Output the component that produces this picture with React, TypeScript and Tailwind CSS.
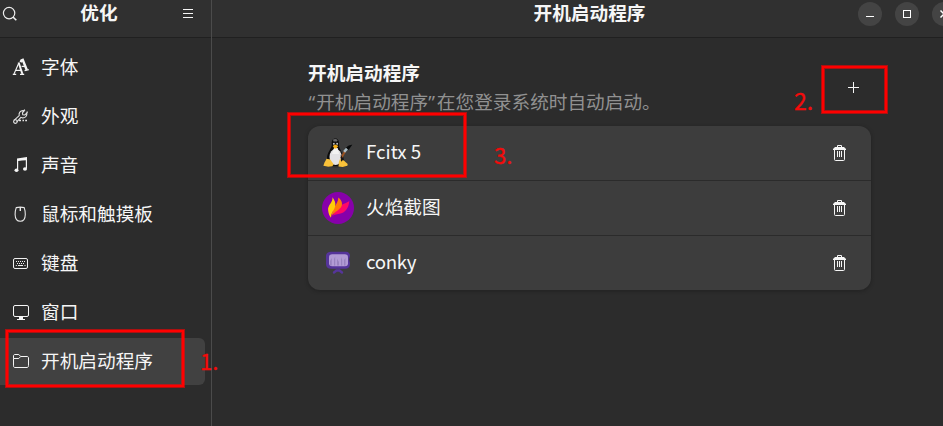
import type { ReactNode } from "react";

const FontIcon = () => (
  <svg width="18" height="20" viewBox="0 0 18 20" fill="none" stroke="#f4f4f4">
    <path d="M2 17L6.8 6M3.2 13.4H9" strokeWidth="1.1" />
    <path d="M6.6 5.5L10.4 17" strokeWidth="2" />
    <path d="M0.8 17.4H4.2M8 17.4H12.2" strokeWidth="1.2" />
    <path d="M8.5 5.2L10 2.6M10.3 1.8L14.8 13" strokeWidth="2.4" />
    <path d="M9.6 9.4H13" strokeWidth="1.3" />
    <path d="M12.6 13.7L16.8 12.6" strokeWidth="1.3" />
  </svg>
);

const WrenchIcon = () => (
  <svg width="18" height="20" viewBox="0 0 18 20" fill="none" stroke="#e4e4e4" strokeWidth="1.1">
    <path d="M2 14.3L7.2 9.6C6.6 7 8.2 4.6 11 4.6L12.2 4.9L10.4 6.8L10.8 8.7L12.8 9L14.8 7.1C15.3 9.7 13.5 12 10.5 11.9L8.9 11.3L4.8 15.8" />
    <circle cx="3.4" cy="15.6" r="1.8" />
    <path d="M7 14.5H9M10.5 14.5H12M13.2 14.5H15" strokeWidth="1.6" />
    <path d="M11.8 4.5L13 3.7M14.9 7L15.4 5.5" />
  </svg>
);

const MusicIcon = () => (
  <svg width="18" height="20" viewBox="0 0 18 20" fill="#f5f5f5">
    <path d="M5 3.5Q10 2.8 15 1.9V13.4H13.8V5.2Q10 5.5 6.2 6V14.5H5Z" />
    <ellipse cx="4.5" cy="15.2" rx="2" ry="1.8" />
    <ellipse cx="13" cy="14" rx="2" ry="1.8" />
  </svg>
);

const MouseIcon = () => (
  <svg width="18" height="20" viewBox="0 0 18 20" fill="none" stroke="#e8e8e8" strokeWidth="1.1">
    <path d="M4.2 3.6Q8.2 2.6 12.2 3.6Q13.2 6.2 13.3 10.5C13.2 14.9 11 17.3 8.3 17.3C5.4 17.3 3.2 14.9 3.1 10.5Q3.2 6.2 4.2 3.6Z" />
    <path d="M8.3 3V7" strokeWidth="1.4" />
  </svg>
);

const KeyboardIcon = () => (
  <svg width="18" height="20" viewBox="0 0 18 20" fill="none" stroke="#f0f0f0">
    <rect x="1.5" y="5.5" width="14" height="10" rx="1.5" />
    <path d="M4 8.5H14M5 10.5H13" strokeDasharray="1 1" />
    <path d="M3.8 12.5H4.8M6 12.5H11M12.5 12.5H13.5" />
  </svg>
);

const MonitorIcon = () => (
  <svg width="18" height="20" viewBox="0 0 18 20" fill="none" stroke="#f5f5f5">
    <rect x="1.5" y="3.5" width="15" height="11" rx="1.5" />
    <path d="M7 15V17H5V18H13V17H11V15" fill="#f5f5f5" stroke="none" />
  </svg>
);

const FolderIcon = () => (
  <svg width="18" height="20" viewBox="0 0 18 20" fill="none" stroke="#f5f5f5">
    <path d="M1.5 7.5V5C1.5 4 2 3.5 3 3.5H6.8L8.7 5.5H15C16 5.5 16.5 6 16.5 7V14.5C16.5 15.6 16 16.5 15 16.5H3C2 16.5 1.5 16 1.5 14.8ZM1.5 7.5H6.8L8.7 5.5" />
  </svg>
);

const TrashIcon = () => (
  <svg className="block" width="16" height="18" viewBox="0 0 16 18" fill="none" stroke="#f6f6f6">
    <path d="M4.5 3V1.5H8.5V3" />
    <path d="M0 6V5L2 3H11L13 5V6Z" fill="#f6f6f6" stroke="none" />
    <path d="M1.5 5V15.5C1.5 16.2 1.8 16.5 2.5 16.5H10.5C11.2 16.5 11.5 16.2 11.5 15.5V5" />
    <path d="M4.5 7V13M6.5 7V13M8.5 7V13" />
  </svg>
);

const PenguinIcon = () => (
  <svg width="32" height="32" viewBox="0 0 32 32">
    <ellipse cx="14" cy="29" rx="11" ry="1.5" fill="#252525" opacity=".6" />
    <path d="M13.5 1.5C10.4 1.5 9.4 4.2 9.8 7.5C9.8 11.5 5 15.2 5 21.5C5 26 9 29 14 29C19.5 29 22 26 21.5 21.5C21 15.6 16.9 12 17 8C17.1 4.2 16.4 1.5 13.5 1.5Z" fill="#0c0c0c" />
    <path d="M11 2.6Q13.5 1.2 15.6 2.9L15 4.5H11.5Z" fill="#69696b" />
    <ellipse cx="13.6" cy="20" rx="6.1" ry="8" fill="#e3e2e5" />
    <path d="M12 11H15.7L17 17H10Z" fill="#f2f2f2" />
    <circle cx="12" cy="6.8" r="1.1" fill="#c8c8c8" />
    <circle cx="15" cy="6.8" r="1.1" fill="#c8c8c8" />
    <circle cx="12.3" cy="7" r=".5" fill="#111" />
    <circle cx="14.7" cy="7" r=".5" fill="#111" />
    <path d="M10.7 9L13.3 7.6L16.3 9.1L14.3 11.6L12.4 11.5Z" fill="#f5ad13" />
    <path d="M4.6 21.8L8.3 22.5L11.6 27.2L10.4 29.2L6.2 29.8L1.4 28.8L2.4 25.8Z" fill="#fac23a" />
    <path d="M18 22L21.8 23.5L25.7 27L25.4 28.7L20.7 29.9L16.5 29.5L16.8 25Z" fill="#fac23a" />
    <path d="M19 21.5L23.2 14" stroke="#9b5221" strokeWidth="2" />
    <path d="M22.1 14.9L25 11.7" stroke="#a9bbc4" strokeWidth="2.5" />
    <path d="M24 10.4Q27 7.5 30.3 7.8Q29 9.6 26.6 13Z" fill="#080a0b" />
    <path d="M18.7 17.5L21.6 22.5L19 24.8Z" fill="#171515" />
  </svg>
);

const FlameIcon = () => (
  <svg width="32" height="32" viewBox="0 0 32 32">
    <circle cx="16" cy="16" r="16" fill="#8700aa" />
    <path d="M27.3 8.8C25 11.6 20.4 11.2 17.4 14.8Q13.6 19 9.4 25.5C11.4 22.5 14 22.4 17.5 21.8C23 20.8 26.8 16.5 27.3 8.8Z" fill="#ff0868" />
    <path d="M16.2 5.4C16.6 9 13.8 12.7 11.3 17L8.8 25.5C11 20.4 15.8 19.5 18.8 15.5C21.2 12.2 20 8.2 16.2 5.4Z" fill="#ff7a09" />
    <path d="M10.5 5.2C11.1 10.2 5.6 13 6.1 18C6.4 21 7.4 24.3 9 25.8C8.6 21 12.3 18.7 13.2 14C13.8 11 12.6 8 10.5 5.2Z" fill="#ffcf08" />
  </svg>
);

const ConkyIcon = () => (
  <svg width="32" height="32" viewBox="0 0 32 32">
    <path d="M12 25.5L14.5 23.5H17.5L20 25.5" fill="none" stroke="#56359a" strokeWidth="2.4" strokeLinecap="round" />
    <path d="M8.5 4.7H24Q28 5 28 8.8L27 12.5L28 16.2Q28 21.8 23 21.8H9Q4 21.8 4 17V9Q4 5.1 8.5 4.7Z" fill="#55349a" />
    <rect x="7" y="7.3" width="19" height="12" rx="3" fill="#b29bd5" />
    <path d="M8 18.5V14L9.8 11V18.5M12 18.5V12L13.2 9.5V18.5M15 18.5V11.8L17 15V18.5M19 18.5V10L20.2 13V18.5M22 18.5V13L23.5 11V18.5" fill="#8f79b5" opacity=".7" />
  </svg>
);

const navigation = [
  { label: "字体", icon: <FontIcon /> },
  { label: "外观", icon: <WrenchIcon /> },
  { label: "声音", icon: <MusicIcon /> },
  { label: "鼠标和触摸板", icon: <MouseIcon /> },
  { label: "键盘", icon: <KeyboardIcon /> },
  { label: "窗口", icon: <MonitorIcon /> },
  { label: "开机启动程序", icon: <FolderIcon />, selected: true },
];

const programs = [
  { name: "Fcitx 5", icon: <PenguinIcon />, spacing: "" },
  { name: "火焰截图", icon: <FlameIcon />, spacing: "" },
  { name: "conky", icon: <ConkyIcon />, spacing: "tracking-[-0.3px]" },
];

function WindowButton({ label, children }: { label: string; children: ReactNode }) {
  return (
    <button aria-label={label} className="flex size-6 shrink-0 items-center justify-center rounded-full bg-[#444444]">
      <svg width="24" height="24" viewBox="0 0 24 24" fill="none" stroke="#ffffff">{children}</svg>
    </button>
  );
}

function Marker({ box, number, numberPlace }: { box: string; number: string; numberPlace: string }) {
  return (
    <>
      <div className={`pointer-events-none absolute border-2 border-[#ff0000] shadow-[0_0_0_1px_#ff000099,inset_0_0_0_1px_#ff000099] ${box}`} />
      <span className={`pointer-events-none absolute font-['Noto_Sans_CJK_SC',sans-serif] leading-8 text-[#f40b0b] [-webkit-text-stroke:0.3px_#f40b0b] ${numberPlace}`}>{number}</span>
    </>
  );
}

export default function App() {
  return (
    <div className="relative flex h-[426px] w-[943px] overflow-hidden bg-[#2c2c2c] font-['Noto_Sans','Noto_Sans_CJK_SC',sans-serif] text-[18.67px] text-[#f6f6f6]">
      <aside className="flex w-[212px] shrink-0 flex-col border-r border-[#4b4b4b]">
        <header className="flex h-[38px] shrink-0 items-start border-b border-[#202020] bg-[#303030]">
          <svg className="mt-1 shrink-0" width="20" height="20" viewBox="0 0 20 20" fill="none" stroke="#eeeeee" strokeWidth="1.2">
            <circle cx="9.1" cy="9.1" r="5.7" />
            <path d="M13 13L16.3 16.3" strokeWidth="1.6" />
          </svg>
          <h1 className="flex-1 pr-[2px] pl-[2px] text-center leading-[25px] font-bold">优化</h1>
          <svg className="mt-1 mr-[13px] shrink-0" width="20" height="20" viewBox="0 0 20 20" stroke="#f5f5f5">
            <path d="M5 5.5H15M5 9.5H15M5 13.5H15" />
          </svg>
        </header>
        <nav className="flex flex-col gap-0.5 pt-1.5 pr-1.5">
          {navigation.map((item) => (
            <a key={item.label} className={`flex h-[47px] items-center gap-[11px] rounded-r-md pl-3 ${item.selected ? "bg-[#414141]" : ""}`}>
              <span className="-mt-px h-5 shrink-0">{item.icon}</span>
              <span className="-mt-px leading-7">{item.label}</span>
            </a>
          ))}
        </nav>
      </aside>
      <main className="flex min-w-0 flex-1 flex-col">
        <header className="flex h-[38px] shrink-0 items-start border-b border-[#202020] bg-[#303030]">
          <h2 className="w-[646px] shrink-0 pl-[109px] text-center leading-[25px] font-bold">开机启动程序</h2>
          <div className="mt-0.5 flex gap-[13px]">
            <WindowButton label="最小化"><path d="M8 14.5H16" /></WindowButton>
            <WindowButton label="最大化"><rect x="8.5" y="8.5" width="7" height="7" /></WindowButton>
            <WindowButton label="关闭"><path d="M8.5 8.5L15.5 15.5M15.5 8.5L8.5 15.5" strokeWidth="1.5" /></WindowButton>
          </div>
        </header>
        <section className="ml-24 w-[563px] pt-5">
          <div className="flex h-[68px] items-start">
            <div className="flex-1">
              <h3 className="leading-[29px] font-bold">开机启动程序</h3>
              <p className="leading-[30px] text-[#919191]">
                <span className="pr-px pl-[0.5px]">“</span>开机启动程序<span className="pr-[2px]">”</span>在您登录系统时自动启动。
              </p>
            </div>
            <button aria-label="添加" className="mt-5 mr-2 size-5">
              <svg width="20" height="20" viewBox="0 0 20 20" stroke="#f5f5f5"><path d="M5 9.5H16M10.5 4V15" /></svg>
            </button>
          </div>
          <ul className="divide-y divide-[#2b2b2b] overflow-hidden rounded-xl bg-[#3d3d3d] shadow-[0_1px_3px_1px_#252525]">
            {programs.map((program, index) => (
              <li key={program.name} className={`flex items-center pr-[22px] pl-3.5 ${index === 2 ? "h-[54px]" : "h-[55px]"}`}>
                <span className="shrink-0">{program.icon}</span>
                <span className={`-mt-[5px] ml-3 flex-1 font-['Noto_Sans_CJK_SC',sans-serif] leading-7 ${program.spacing}`}>{program.name}</span>
                <button aria-label="删除"><TrashIcon /></button>
              </li>
            ))}
          </ul>
        </section>
      </main>
      <Marker box="top-[330px] left-[6px] h-[57px] w-[178px]" number="1." numberPlace="top-[344px] left-[200px] text-[22px]" />
      <Marker box="top-[66px] left-[822px] h-[47px] w-[65px]" number="2." numberPlace="top-[84px] left-[794px] text-[23px]" />
      <Marker box="top-[113px] left-[288px] h-[64px] w-[178px]" number="3." numberPlace="top-[138px] left-[494px] text-[22px]" />
    </div>
  );
}
